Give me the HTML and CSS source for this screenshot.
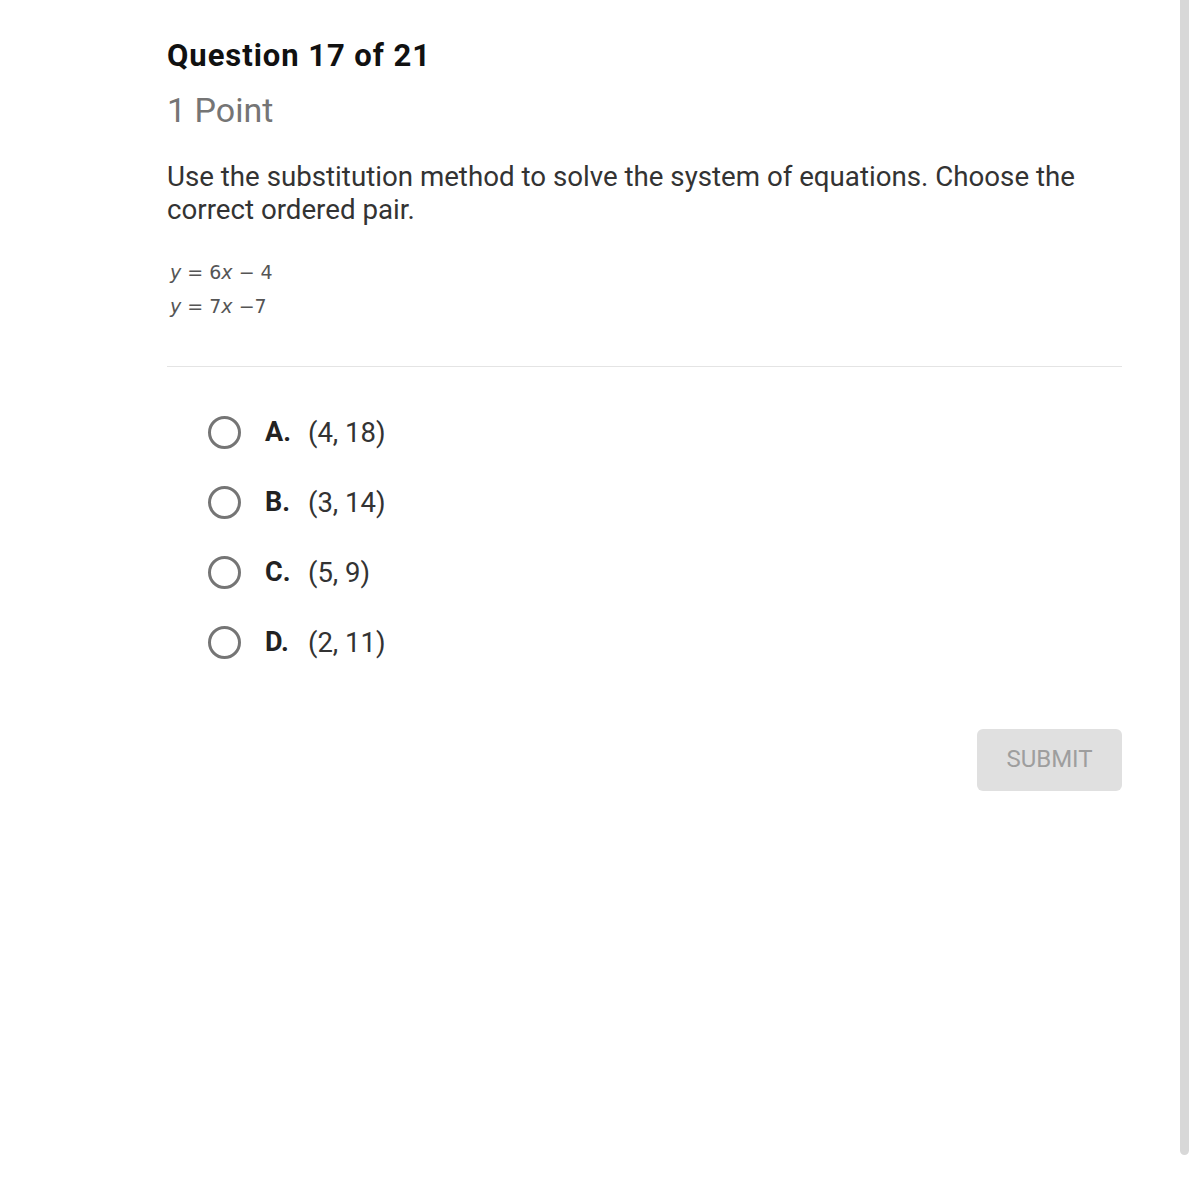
FILE: index.html
```html
<!DOCTYPE html>
<html>
<head>
<meta charset="utf-8">
<link rel="stylesheet" href="styles.css">
</head>
<body>
<div class="page">
  <main class="content">
    <h1 class="qnum">Question 17 of 21</h1>
    <div class="points">1 Point</div>
    <p class="prompt">Use the substitution method to solve the system of equations. Choose the correct ordered pair.</p>
    <div class="eqs">
      <div class="eq"><i>y</i> = 6<i>x</i> − 4</div>
      <div class="eq"><i>y</i> = 7<i>x</i> −7</div>
    </div>
    <hr class="divider">
    <ul class="choices">
      <li class="choice"><span class="radio"></span><span class="letter">A.</span><span class="val">(4, 18)</span></li>
      <li class="choice"><span class="radio"></span><span class="letter">B.</span><span class="val">(3, 14)</span></li>
      <li class="choice"><span class="radio"></span><span class="letter">C.</span><span class="val">(5, 9)</span></li>
      <li class="choice"><span class="radio"></span><span class="letter">D.</span><span class="val">(2, 11)</span></li>
    </ul>
    <div class="actions"><button class="submit">SUBMIT</button></div>
  </main>
  <div class="scrollbar"></div>
</div>
</body>
</html>
```
FILE: styles.css
```css
html, body { margin: 0; padding: 0; background: #fff; }
body { font-family: Roboto, "Noto Sans", sans-serif; color: #333; }
.page { display: flex; height: 1200px; }
.content { width: 955px; margin-left: 167px; padding-top: 38px; }
.qnum { margin: 0; font-size: 31px; font-weight: 700; color: #111; line-height: 36px; letter-spacing: 0.95px; }
.points { margin-top: 17px; font-size: 34px; color: #757575; line-height: 38px; }
.prompt { margin: 31px 0 0; font-size: 27.7px; line-height: 33px; color: #333; }
.eqs { margin-top: 29px; padding-left: 3px; font-family: "DejaVu Sans", sans-serif; font-size: 19px; color: #555; }
.eq { line-height: 34px; }
.eq i { font-style: italic; }
.divider { margin: 43px 0 0; border: 0; border-top: 1px solid #e4e4e4; height: 0; }
.choices { list-style: none; margin: 30px 0 0; padding: 0 0 0 41px; }
.choice { display: flex; align-items: center; height: 70px; }
.radio { width: 27px; height: 27px; border: 3px solid #757575; border-radius: 50%; flex: none; }
.letter { margin-left: 24px; font-weight: 700; font-size: 27px; color: #222; width: 43px; }
.val { font-size: 27.5px; color: #333; }
.actions { display: flex; justify-content: flex-end; margin-top: 52px; }
.submit { width: 145px; height: 62px; border: 0; border-radius: 6px; background: #e0e0e0; color: #9e9e9e; font-family: Roboto, sans-serif; font-size: 24px; padding: 0 0 3px; }
.scrollbar { width: 9px; height: 1155px; margin-left: 58px; background: #d8d8d8; border-radius: 0 0 5px 5px; }
```
